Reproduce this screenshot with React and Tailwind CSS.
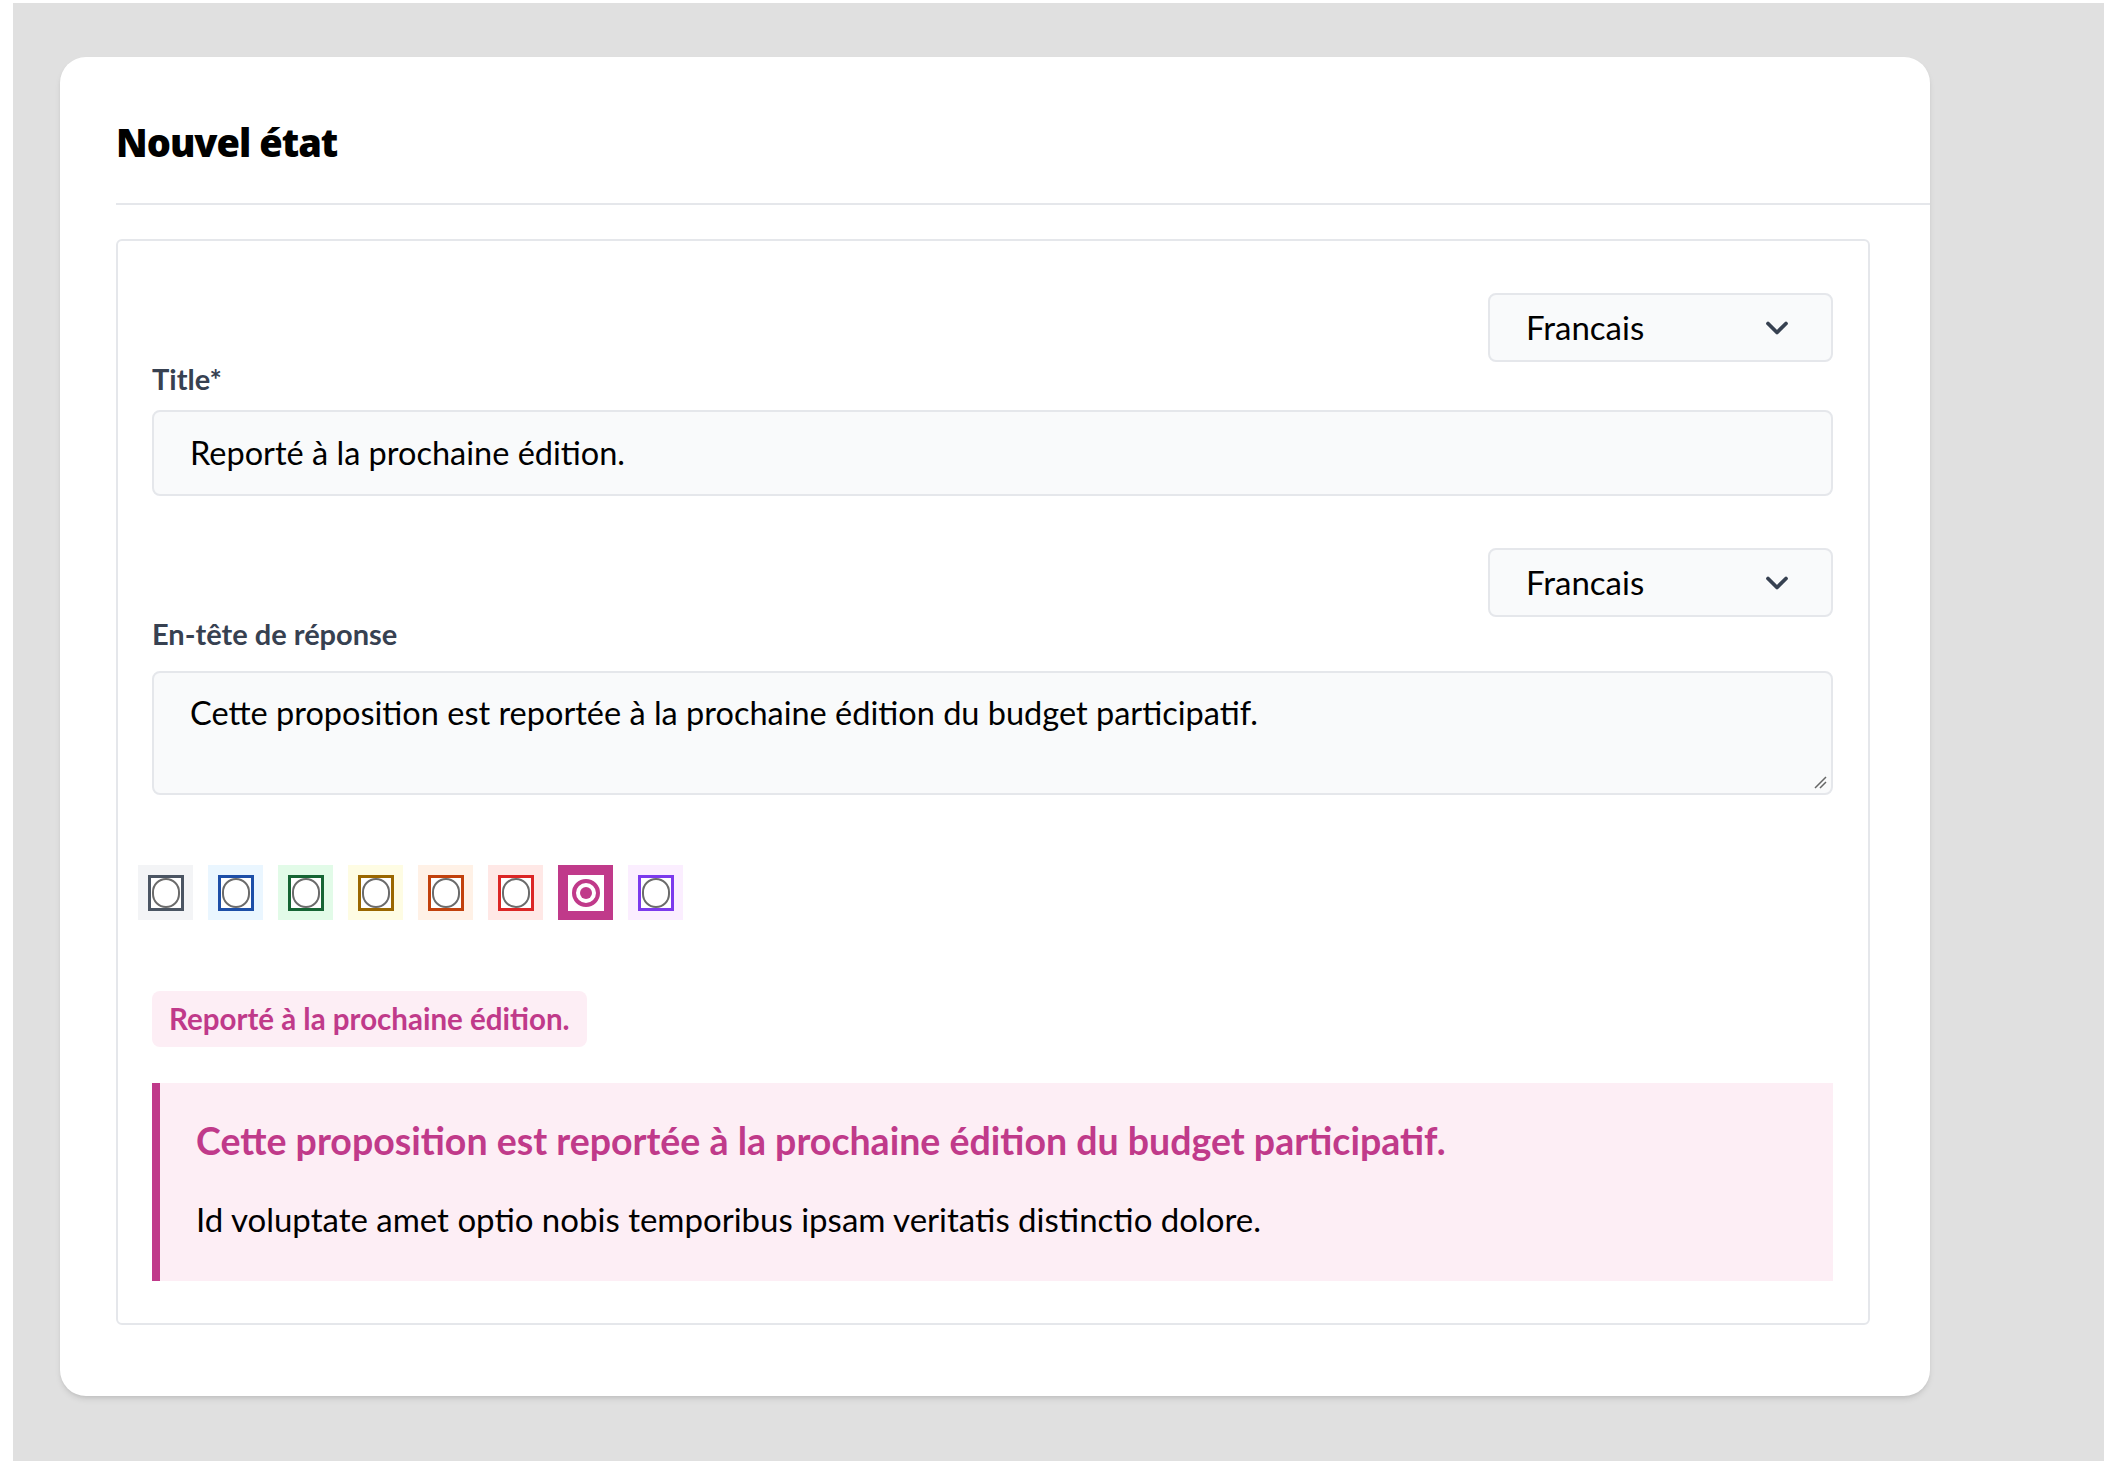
import { ChevronDown } from 'lucide-react'

const swatches = [
  { bg: 'bg-[#f3f4f6]', border: 'border-[#4b5563]' },
  { bg: 'bg-[#eaf6ff]', border: 'border-[#1d4fa8]' },
  { bg: 'bg-[#e2fbe8]', border: 'border-[#166534]' },
  { bg: 'bg-[#fefce3]', border: 'border-[#9a6700]' },
  { bg: 'bg-[#fff1e6]', border: 'border-[#c2410c]' },
  { bg: 'bg-[#ffe8e6]', border: 'border-[#dc2626]' },
  { bg: 'bg-[#c03a8a]', border: 'border-white', active: true },
  { bg: 'bg-[#fbeeff]', border: 'border-[#7c3aed]' },
]

function LangSelect() {
  return (
    <div className="flex justify-end">
      <div className="w-[345px] h-[69px] flex items-center justify-between pl-9 pr-9 bg-[#f9fafb] border-2 border-[#e5e7eb] rounded-lg">
        <span className="text-[33px] text-black">Francais</span>
        <ChevronDown size={36} strokeWidth={2.5} className="text-[#374151]" />
      </div>
    </div>
  )
}

export default function App() {
  return (
    <div className="min-h-[1461px] bg-[#e0e0e0] pl-[60px] pt-[54px] border-l-[13px] border-t-[3px] border-white" style={{ fontFamily: 'Lato, "Noto Sans", sans-serif' }}>
      <div className="w-[1870px] h-[1339px] -ml-[13px] bg-white rounded-[26px] shadow-md pl-[56px] pt-[50px]">
        <h1 className="text-[38px] font-black text-black h-[70px] leading-[70px]" style={{ fontFamily: '"Noto Sans", sans-serif', letterSpacing: '-1px' }}>Nouvel état</h1>
        <div className="h-[2px] bg-[#e5e7eb] mt-[26px]" />
        <div className="mt-[34px] mr-[60px] border-2 border-[#e5e7eb] rounded-md pl-[34px] pr-[35px] pt-[52px] h-[1086px]">
          <LangSelect />
          <div className="text-[29px] font-bold text-[#374151] h-[34px] leading-[34px]">Title*</div>
          <div className="mt-[14px] h-[86px] bg-[#f9fafb] border-2 border-[#e5e7eb] rounded-lg flex items-center px-9 text-[32.5px] text-black">Reporté à la prochaine édition.</div>
          <div className="mt-[52px]"><LangSelect /></div>
          <div className="text-[29px] font-bold text-[#374151] h-[34px] leading-[34px]">En-tête de réponse</div>
          <div className="relative mt-[20px] h-[124px] bg-[#f9fafb] border-2 border-[#e5e7eb] rounded-lg px-9 pt-[16px] text-[32.5px] text-black">
            Cette proposition est reportée à la prochaine édition du budget participatif.
            <svg className="absolute right-1 bottom-1" width="14" height="14" viewBox="0 0 14 14"><path d="M2 13 L13 2 M7 13 L13 7" stroke="#666" strokeWidth="1.5" /></svg>
          </div>
          <div className="flex gap-[15px] mt-[70px] -ml-[14px]">
            {swatches.map((s, i) => (
              <div key={i} className={`w-[55px] h-[55px] flex items-center justify-center ${s.bg}`}>
                <div className={`w-[36px] h-[36px] bg-white border-[3px] ${s.border} flex items-center justify-center`}>
                  {s.active ? (
                    <div className="w-[28px] h-[28px] rounded-full border-[4px] border-[#c03a8a] bg-white flex items-center justify-center">
                      <div className="w-[12px] h-[12px] rounded-full bg-[#c03a8a]" />
                    </div>
                  ) : (
                    <div className="w-[28px] h-[30px] rounded-full border-2 border-[#6b6b6b]" />
                  )}
                </div>
              </div>
            ))}
          </div>
          <div className="mt-[71px] inline-flex items-center h-[56px] px-[17px] rounded-lg bg-[#fdeef5] text-[#c03a8a] text-[29.5px] font-bold">Reporté à la prochaine édition.</div>
          <div className="mt-[36px] h-[198px] bg-[#fdeef5] border-l-[8px] border-[#c03a8a] pl-[36px] pt-[34px]">
            <div className="text-[37.5px] font-bold text-[#c03a8a] leading-[48px]">Cette proposition est reportée à la prochaine édition du budget participatif.</div>
            <div className="mt-[34px] text-[33px] text-black leading-[40px]">Id voluptate amet optio nobis temporibus ipsam veritatis distinctio dolore.</div>
          </div>
        </div>
      </div>
    </div>
  )
}
